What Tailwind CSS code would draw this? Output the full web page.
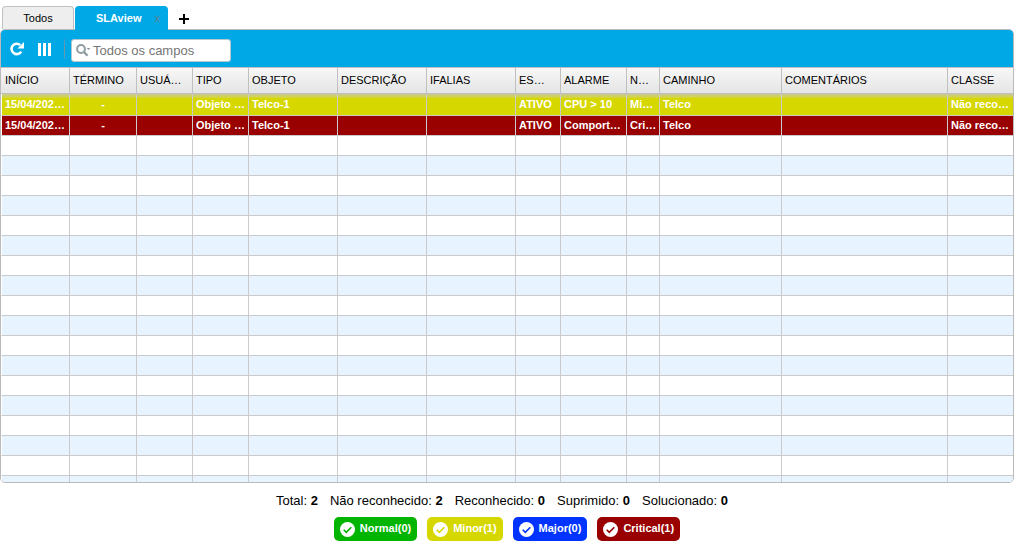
<!DOCTYPE html>
<html lang="pt-BR">
<head>
<meta charset="utf-8">
<title>SLAview</title>
<script src="https://cdn.jsdelivr.net/npm/@tailwindcss/browser@4"></script>
</head>
<body class="flex h-screen flex-col overflow-hidden bg-white pt-[6px] font-['Liberation_Sans',Arial,sans-serif] text-[11px] leading-4 text-black">
<nav class="flex h-[23px] shrink-0 items-stretch pl-[2px]">
  <button type="button" class="w-[72px] rounded-t border border-b-0 border-[#c0c0c0] bg-[#eeeeee]">Todos</button>
  <div class="z-10 ml-px -mb-px flex w-[93px] rounded-t bg-[#00a8e6] pl-[21px] text-white">
    <button type="button" class="font-bold">SLAview</button>
    <button type="button" aria-label="Fechar SLAview" class="ml-[13px] text-[#5f8290]">x</button>
  </div>
  <button type="button" aria-label="Adicionar aba" class="ml-[11px]">
    <svg class="mt-[3px] size-[10px]" viewBox="0 0 10 10"><path d="M5 0v10M0 5h10" stroke="#000" stroke-width="2"/></svg>
  </button>
</nav>
<main class="mr-1 flex min-h-0 flex-1 flex-col overflow-hidden rounded-[5px] border border-[#bababa]">
  <div class="flex h-[37px] shrink-0 items-center bg-[#00a8e6] pl-[9px]">
    <button type="button" aria-label="Atualizar" class="pt-px">
      <svg class="size-[14px]" viewBox="0 0 14 14"><path d="M11.2 9.6A5.2 5.2 0 1 1 10.2 3" fill="none" stroke="#fff" stroke-width="2.6"/><path d="M14 0v6.5H7.5z" fill="#fff"/></svg>
    </button>
    <button type="button" aria-label="Colunas" class="ml-[14px] pt-px">
      <svg class="h-[13px] w-[14px]" viewBox="0 0 14 13"><path d="M0 0h3v13H0zM5 0h3v13H5zM10 0h3v13h-3z" fill="#fff"/></svg>
    </button>
    <span class="ml-[12px] h-[20px] w-px bg-gradient-to-b from-[#37a0c8] via-[#7d8f98] to-[#37a0c8]"></span>
    <label class="mt-[4px] ml-[6px] flex h-[23px] w-[160px] items-center rounded-[3px] border border-[#b4c6ce] bg-white pl-[4px]">
      <svg class="h-[13px] w-[15px] shrink-0" viewBox="0 0 15 13"><circle cx="5" cy="5" r="3.9" fill="none" stroke="#8f9ca3" stroke-width="2"/><path d="M8 8l3.5 3.7" stroke="#8f9ca3" stroke-width="2.4"/><path d="M10.5 4h4l-2 2z" fill="#8f9ca3"/></svg>
      <input type="text" aria-label="Buscar" placeholder="Todos os campos" class="ml-[2px] w-full min-w-0 bg-transparent text-[13px] outline-none placeholder:text-[#757575]">
    </label>
  </div>
  <div class="min-h-0 flex-1 overflow-hidden">
    <table class="w-full table-fixed border-separate border-spacing-0 [&_td]:overflow-hidden [&_td]:border-r [&_td]:border-b [&_td]:border-[#cbcbcb] [&_td]:pb-[2px] [&_td]:pl-[3px] [&_td]:whitespace-nowrap [&_td:first-child]:border-l [&_td:first-child]:border-l-white [&_td:last-child]:border-r-0 [&_th]:overflow-hidden [&_th]:border-y [&_th]:border-r [&_th]:border-[#c0c0c0] [&_th]:pb-[2px] [&_th]:pl-[3px] [&_th]:text-left [&_th]:font-normal [&_th]:whitespace-nowrap [&_th:first-child]:pl-[4px] [&_th:last-child]:border-r-0">
      <colgroup>
        <col class="w-[69px]"><col class="w-[67px]"><col class="w-[56px]"><col class="w-[56px]"><col class="w-[89px]"><col class="w-[89px]"><col class="w-[89px]"><col class="w-[45px]"><col class="w-[66px]"><col class="w-[33px]"><col class="w-[122px]"><col><col class="w-[65px]">
      </colgroup>
      <thead>
        <tr class="h-[27px] bg-gradient-to-b from-[#f8f8f8] to-[#e4e4e4]">
          <th>INÍCIO</th><th>TÉRMINO</th><th>USUÁ…</th><th>TIPO</th><th>OBJETO</th><th>DESCRIÇÃO</th><th>IFALIAS</th><th>ES…</th><th>ALARME</th><th>N…</th><th>CAMINHO</th><th>COMENTÁRIOS</th><th>CLASSE</th>
        </tr>
      </thead>
      <tbody id="alarms">
        <tr class="h-[22px] bg-gradient-to-b from-[#c9c98c] via-[#d7d700] via-20% to-[#d7d700] font-bold text-white">
          <td>15/04/202…</td><td class="pr-[3px] text-center">-</td><td></td><td>Objeto …</td><td>Telco-1</td><td></td><td></td><td>ATIVO</td><td>CPU &gt; 10</td><td>Mi…</td><td>Telco</td><td></td><td>Não reco…</td>
        </tr>
        <tr class="h-[20px] bg-[#990000] font-bold text-white">
          <td>15/04/202…</td><td class="pr-[3px] text-center">-</td><td></td><td>Objeto …</td><td>Telco-1</td><td></td><td></td><td>ATIVO</td><td>Comport…</td><td>Cri…</td><td>Telco</td><td></td><td>Não reco…</td>
        </tr>
      </tbody>
    </table>
  </div>
</main>
<footer class="flex h-[62px] shrink-0 flex-col items-center pt-[9px] pr-1">
  <div class="flex gap-[12px] pr-[10px] text-[13px] leading-[18px] whitespace-nowrap">
    <span>Total: <b>2</b></span><span>Não reconhecido: <b>2</b></span><span>Reconhecido: <b>0</b></span><span>Suprimido: <b>0</b></span><span>Solucionado: <b>0</b></span>
  </div>
  <div class="mt-[7px] flex gap-[10px] font-bold text-white">
    <button type="button" class="flex h-[24px] items-center gap-[5px] rounded-[5px] bg-[#00b400] px-[6px]"><svg class="mt-px size-[15px]" viewBox="0 0 15 15"><circle cx="7.5" cy="7.5" r="7.5" fill="#fff"/><path d="M3.7 7.7l2.6 2.6 5-5" fill="none" stroke="#00b400" stroke-width="1.6"/></svg><span class="pb-[2px]">Normal(0)</span></button>
    <button type="button" class="flex h-[24px] items-center gap-[5px] rounded-[5px] bg-[#d7d700] px-[6px]"><svg class="mt-px size-[15px]" viewBox="0 0 15 15"><circle cx="7.5" cy="7.5" r="7.5" fill="#fff"/><path d="M3.7 7.7l2.6 2.6 5-5" fill="none" stroke="#d7d700" stroke-width="1.6"/></svg><span class="pb-[2px]">Minor(1)</span></button>
    <button type="button" class="flex h-[24px] items-center gap-[5px] rounded-[5px] bg-[#0033ff] px-[6px]"><svg class="mt-px size-[15px]" viewBox="0 0 15 15"><circle cx="7.5" cy="7.5" r="7.5" fill="#fff"/><path d="M3.7 7.7l2.6 2.6 5-5" fill="none" stroke="#0033ff" stroke-width="1.6"/></svg><span class="pb-[2px]">Major(0)</span></button>
    <button type="button" class="flex h-[24px] items-center gap-[5px] rounded-[5px] bg-[#990000] px-[6px]"><svg class="mt-px size-[15px]" viewBox="0 0 15 15"><circle cx="7.5" cy="7.5" r="7.5" fill="#fff"/><path d="M3.7 7.7l2.6 2.6 5-5" fill="none" stroke="#990000" stroke-width="1.6"/></svg><span class="pb-[2px]">Critical(1)</span></button>
  </div>
</footer>
<script>
  // Fill the rest of the grid with striped blank rows
  const body = document.getElementById('alarms');
  for (let i = 0; i < 60; i++) {
    const row = body.insertRow();
    row.className = i % 2 ? 'h-[20px] bg-[#e7f3ff]' : 'h-[20px] bg-white';
    for (let c = 0; c < 13; c++) row.insertCell();
  }
</script>
</body>
</html>
